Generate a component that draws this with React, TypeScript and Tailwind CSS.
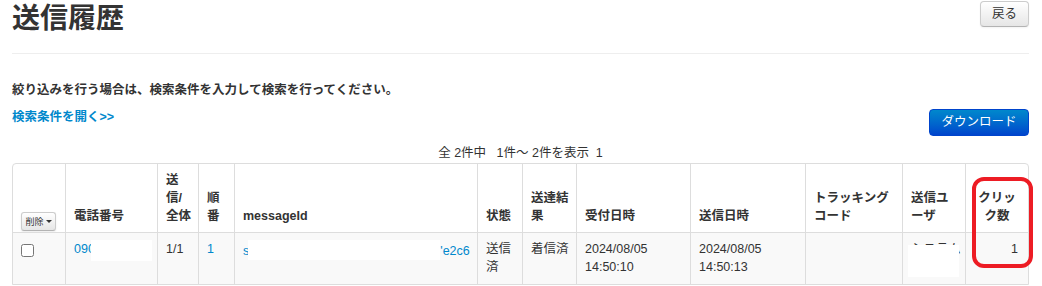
import React from "react";

type Row = {
  tel: string;
  part: string;
  seq: string;
  idHead: string;
  idTail: string;
  state: string[];
  result: string;
  received: string[];
  sent: string[];
  user: string[];
  clicks: string;
};

const rows: Row[] = [
  {
    tel: "090",
    part: "1/1",
    seq: "1",
    idHead: "s",
    idTail: "'e2c6",
    state: ["送信", "済"],
    result: "着信済",
    received: ["2024/08/05", "14:50:10"],
    sent: ["2024/08/05", "14:50:13"],
    user: ["システム", "管理者"],
    clicks: "1",
  },
];

const th = "align-bottom whitespace-nowrap font-bold px-2 pt-[7px] pb-[7px] border-l border-[#ddd]";
const td = "align-top whitespace-nowrap px-2 pt-[7px] pb-[8px] border-t border-l border-[#ddd]";

export default function App() {
  return (
    <div className="relative min-h-[286px] bg-white font-['Liberation_Sans','Noto_Sans_CJK_JP',sans-serif] text-[12.5px] text-[#333]">
      <div className="ml-[12px] w-[1017px]">
        {/* page header */}
        <div className="flex items-start justify-between">
          <h1 className="text-[28px] leading-[38px] font-bold">送信履歴</h1>
          <button className="mt-px h-[26px] w-[49px] rounded-[4px] border border-[#ccc] border-b-[#b3b3b3] bg-linear-to-b from-white to-[#e6e6e6] text-[12.5px] text-[#333] shadow-[inset_0_1px_0_rgba(255,255,255,0.2),0_1px_2px_rgba(0,0,0,0.05)]">
            戻る
          </button>
        </div>
        <div className="mt-[15px] border-t border-[#eee]" />

        <p className="mt-[27px] leading-[18px] font-bold">
          絞り込みを行う場合は、検索条件を入力して検索を行ってください。
        </p>

        <div className="mt-[10px] flex items-start justify-between">
          <a className="-mt-px leading-[18px] font-bold text-[#0088cc]">検索条件を開く&gt;&gt;</a>
          <button className="h-[27px] w-[100px] rounded-[4px] border border-[#0044cc] bg-linear-to-b from-[#0088cc] to-[#0044cc] text-[12.5px] text-white">
            ダウンロード
          </button>
        </div>

        <div className="mt-[8px] text-center leading-[18px] whitespace-pre">全 2件中   1件～ 2件を表示  1</div>

        {/* result table */}
        <table className="mt-px w-[1017px] table-fixed border-separate border-spacing-0 rounded-t-[4px] border border-[#ddd] leading-[18px]">
          <thead>
            <tr>
              <th className="text-left align-bottom px-2 pt-[7px] pb-px w-[52px]">
                <button className="flex h-[19px] w-[35px] items-center justify-center gap-[2px] rounded-[3px] border border-[#ccc] border-b-[#b3b3b3] bg-linear-to-b from-white to-[#e6e6e6] text-[9px] font-normal text-[#333] shadow-[0_1px_2px_rgba(0,0,0,0.08)]">
                  削除
                  <span className="h-0 w-0 border-x-[3px] border-t-[3px] border-x-transparent border-t-[#333]" />
                </button>
              </th>
              <th className={`${th} text-left w-[92px]`}>電話番号</th>
              <th className={`${th} text-left w-[41px]`}>
                送<br />信/<br />全体
              </th>
              <th className={`${th} text-left w-[36px]`}>
                順<br />番
              </th>
              <th className={`${th} text-left w-[243px]`}>messageId</th>
              <th className={`${th} text-left w-[45px]`}>状態</th>
              <th className={`${th} text-left w-[54px]`}>
                送達結<br />果
              </th>
              <th className={`${th} text-left w-[114px]`}>受付日時</th>
              <th className={`${th} text-left w-[115px]`}>送信日時</th>
              <th className={`${th} text-left w-[97px]`}>
                トラッキング<br />コード
              </th>
              <th className={`${th} text-left w-[63px]`}>
                送信ユ<br />ーザ
              </th>
              <th className={`${th} text-center w-[63px]`}>
                クリッ<br />ク数
              </th>
            </tr>
          </thead>
          <tbody>
            {rows.map((r, i) => (
              <tr key={i} className="bg-[#f9f9f9]">
                <td className="align-top px-2 pt-[7px] pb-[8px] border-t border-[#ddd]">
                  <input type="checkbox" className="mt-[4px] block h-[13px] w-[13px]" />
                </td>
                <td className={td}>
                  <span className="relative text-[#0088cc]">
                    {r.tel}
                    <span className="absolute left-[17px] top-[-2px] h-[21px] w-[61px] bg-white" />
                  </span>
                </td>
                <td className={td}>{r.part}</td>
                <td className={`${td} text-[#0088cc]`}>{r.seq}</td>
                <td className={`${td} text-[#0088cc]`}>
                  {r.idHead}
                  <span className="-ml-px inline-block h-[20px] w-[192px] bg-white align-[-5px]" />
                  {r.idTail}
                </td>
                <td className={td}>
                  {r.state[0]}
                  <br />
                  {r.state[1]}
                </td>
                <td className={td}>{r.result}</td>
                <td className={td}>
                  {r.received[0]}
                  <br />
                  {r.received[1]}
                </td>
                <td className={td}>
                  {r.sent[0]}
                  <br />
                  {r.sent[1]}
                </td>
                <td className={td}></td>
                <td className={td}>
                  <div className="relative">
                    {r.user[0]}
                    <br />
                    {r.user[1]}
                    <span className="absolute left-[-3px] top-[5px] h-[32px] w-[51px] bg-white" />
                  </div>
                </td>
                <td className={`${td} pr-[10px] text-right`}>{r.clicks}</td>
              </tr>
            ))}
          </tbody>
        </table>
      </div>

      {/* annotation */}
      <div className="absolute left-[972px] top-[177px] h-[91px] w-[61px] rounded-[12px] border-[4px] border-[#ed1c24]" />
    </div>
  );
}
